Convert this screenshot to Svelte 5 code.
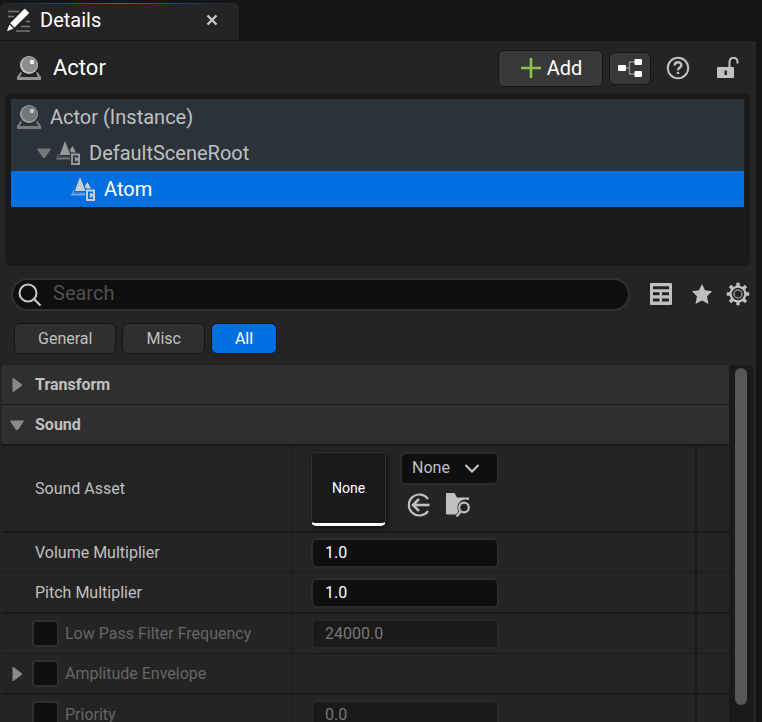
<script>
  const filters = ['General', 'Misc', 'All'];
  let active = $state('All');
  let search = $state('');
  let asset = $state('None');
  let volume = $state('1.0');
  let pitch = $state('1.0');
  let frequency = $state('24000.0');
  let priority = $state('0.0');
</script>

{#snippet actorIcon()}
  <svg class="actor-icon" width="24" height="24" viewBox="0 0 24 24" aria-hidden="true">
    <path d="M3.500 16 L0 21 V24 H24 V21 L20.500 16 H19.500 V18 L21 21 H3 L4.500 18 V16Z" fill="#939393" />
    <circle cx="12" cy="9" r="9" fill="#c4c4c4" />
    <circle cx="12.500" cy="8.500" r="7.800" fill="#8d8d8d" />
    <circle cx="15" cy="6" r="2.200" fill="#fff" />
  </svg>
{/snippet}

{#snippet sceneIcon()}
  <svg class="scene-icon" width="24" height="24" viewBox="0 0 24 24" aria-hidden="true">
    <path d="M2.500 15 L0 18.500 H14 V15.500 H2.500Z" fill="currentColor" opacity=".35" />
    <path d="M1 16.500 L3 13 M0 17.800 H14" stroke="currentColor" stroke-width="1" opacity=".6" />
    <path d="M9 0 L14.500 14 H3.800Z M16.500 5 L20 11.500 H15 L13.800 9Z" fill="currentColor" />
    <path fill-rule="evenodd" d="M15 12.500 H24 V24 H15Z M17 14.500 V22 H22 V19.500 H20.700 V20.500 H18.800 V16 H20.700 V17 H22 V14.500Z" fill="currentColor" />
  </svg>
{/snippet}

{#snippet arrow(open)}
  <svg class="arrow" width="16" height="16" viewBox="0 0 16 16" aria-hidden="true">
    {#if open}
      <path d="M1.500 4 H14.500 L8.800 12.500 H7.200Z" fill="currentColor" stroke="currentColor" stroke-linejoin="round" />
    {:else}
      <path d="M4 1.200 L12.500 7.500 V8.500 L4 14.800Z" fill="currentColor" stroke="currentColor" stroke-linejoin="round" />
    {/if}
  </svg>
{/snippet}

<div class="window">
  <header class="tabs">
    <div class="tab">
      <svg width="24" height="24" viewBox="0 0 24 24" aria-hidden="true">
        <path d="M1 3.500 H12.500 M1 8.500 H7 M19 13.500 H23 M14 18.500 H23 M9 23 H23" stroke="#777" stroke-width="1.500" />
        <path d="M16.500 1.800 L18 .8 L22 4.800 L21 6.300 L7.500 19.500 L3.200 15.200Z" fill="#fff" />
        <path d="M2.500 16.500 L6.500 20.500 L0 23.300Z" fill="#fff" />
      </svg>
      <span>Details</span>
      <button class="plain close" aria-label="Close tab">
        <svg width="12" height="12" viewBox="0 0 12 12"><path d="M1.500 1.500 L10.500 10.500 M10.500 1.500 L1.500 10.500" stroke="#c8c8c8" stroke-width="2.400" /></svg>
      </button>
    </div>
  </header>

  <main class="panel">
    <div class="title">
      {@render actorIcon()}
      <h1>Actor</h1>
      <button class="raised add">
        <svg width="20" height="20" viewBox="0 0 20 20" aria-hidden="true"><path d="M10 0 V20 M0 10 H20" stroke="#8bc24a" stroke-width="2.600" /></svg>
        Add
      </button>
      <button class="raised graph" aria-label="Edit blueprint">
        <svg width="24" height="20" viewBox="0 0 24 20">
          <path d="M8 10 H11.500 M17 4 H11.500 V16 H17" fill="none" stroke="#8c8c8c" stroke-width="1.300" />
          <rect x="0" y="7" width="8" height="6" rx="1" fill="#fff" />
          <rect x="16.500" y="1" width="7.500" height="6" rx="1" fill="#fff" />
          <rect x="16.500" y="13" width="7.500" height="6" rx="1" fill="#fff" />
        </svg>
      </button>
      <button class="plain help" aria-label="Help">
        <svg width="24" height="24" viewBox="0 0 24 24">
          <circle cx="12" cy="12" r="10.200" fill="none" stroke="#c0c0c0" stroke-width="2" />
          <path d="M8.600 9.400 C8.600 5.200 15.400 5.200 15.400 9.200 C15.400 11.600 12 11.500 12 14.200" fill="none" stroke="#c0c0c0" stroke-width="2.400" />
          <rect x="10.800" y="15.800" width="2.400" height="2.300" fill="#c0c0c0" />
        </svg>
      </button>
      <button class="plain lock" aria-label="Lock details">
        <svg width="22" height="22" viewBox="0 0 22 22">
          <path d="M12.500 11 V5.500 C12.500 -.8 20.500 -.8 20.500 5 V6.500" fill="none" stroke="#c0c0c0" stroke-width="2" />
          <path fill-rule="evenodd" d="M1 10 H16 Q17 10 17 11 V20.200 Q17 21 16 21 H1 Q0 21 0 20.200 V11 Q0 10 1 10Z M7.500 13.500 V18 H10 V13.500Z" fill="#c0c0c0" />
        </svg>
      </button>
    </div>

    <div class="tree" role="tree" aria-label="Components">
      <div class="node" role="treeitem" aria-selected="false">{@render actorIcon()}<span>Actor (Instance)</span></div>
      <div class="node child" role="treeitem" aria-selected="false">{@render arrow(true)}{@render sceneIcon()}<span>DefaultSceneRoot</span></div>
      <div class="node grandchild selected" role="treeitem" aria-selected="true">{@render sceneIcon()}<span>Atom</span></div>
    </div>

    <div class="tools">
      <label class="search">
        <svg width="24" height="24" viewBox="0 0 24 24" aria-hidden="true">
          <circle cx="10" cy="10" r="8.500" fill="none" stroke="#c8c8c8" stroke-width="2" />
          <path d="M16 16 L22.500 22.500" stroke="#c8c8c8" stroke-width="2.200" />
        </svg>
        <input type="text" placeholder="Search" aria-label="Search" bind:value={search} />
      </label>
      <button class="plain" aria-label="Property matrix">
        <svg width="22" height="22" viewBox="0 0 22 22">
          <path fill-rule="evenodd" fill="#c0c0c0" d="M1 0 H21 Q22 0 22 1 V21 Q22 22 21 22 H1 Q0 22 0 21 V1 Q0 0 1 0Z M3 3.200 V6.200 H19 V3.200Z M3 9.200 V12.200 H9.500 V9.200Z M12 9.200 V12.200 H19 V9.200Z M3 15.500 V18.500 H9.500 V15.500Z M12 15.500 V18.500 H19 V15.500Z" />
        </svg>
      </button>
      <button class="plain" aria-label="Favorites">
        <svg width="20" height="20" viewBox="0 0 20 20"><path fill="#c0c0c0" d="M10 0 L13 6.200 L20 7.200 L15 12.200 L16.500 20 L10 16.500 L3.500 20 L5 12.200 L0 7.200 L7 6.200Z" /></svg>
      </button>
      <button class="plain" aria-label="Settings">
        <svg width="24" height="24" viewBox="0 0 24 24">
          <g fill="none" stroke="#c0c0c0">
            <circle cx="12" cy="12" r="7.400" stroke-width="2.400" />
            <path stroke-width="3.400" d="M12 .8 V4.500 M12 19.500 V23.200 M.8 12 H4.500 M19.500 12 H23.200 M4 4 L6.800 6.800 M17.200 17.200 L20 20 M20 4 L17.200 6.800 M6.800 17.200 L4 20" />
            <circle cx="12" cy="12" r="4" stroke="#8e8e8e" stroke-width="1.500" />
          </g>
        </svg>
      </button>
    </div>

    <div class="filters">
      {#each filters as name}
        <button class:active={active === name} onclick={() => (active = name)}>{name}</button>
      {/each}
    </div>

    <div class="properties">
      <div class="list">
        <button class="category">{@render arrow(false)}Transform</button>
        <button class="category open">{@render arrow(true)}Sound</button>

        <div class="row asset thick">
          <label class="name" for="asset">Sound Asset</label>
          <div class="value">
            <div class="thumb">None</div>
            <div class="picker">
              <div class="combo">
                <select id="asset" bind:value={asset}><option>None</option></select>
                <svg width="16" height="9" viewBox="0 0 16 9" aria-hidden="true"><path d="M1.500 1 L8 7.500 L14.500 1" fill="none" stroke="#c8c8c8" stroke-width="2" /></svg>
              </div>
              <div class="actions">
                <button class="plain" aria-label="Use selected asset">
                  <svg width="24" height="24" viewBox="0 0 24 24">
                    <g fill="none" stroke="#c0c0c0" stroke-width="2.200">
                      <path d="M21 6 A10.500 10.500 0 1 0 21 18" />
                      <path d="M22.500 12 H6" stroke-width="2.600" /><path d="M12 6 L6 12 L12 18" stroke-width="2.600" />
                    </g>
                  </svg>
                </button>
                <button class="plain" aria-label="Browse to asset">
                  <svg width="24" height="24" viewBox="0 0 24 24">
                    <path d="M1 0 H8.500 L11 4.500 H23 V7 C17 5 11.500 9 11.500 14.500 C11.500 16.500 12 17.500 12.500 18.500 L10 21.500 H1 Q0 21.500 0 20.500 V1 Q0 0 1 0Z" fill="#c0c0c0" />
                    <circle cx="18" cy="14.500" r="4.800" fill="none" stroke="#c0c0c0" stroke-width="2.200" />
                    <path d="M14.800 18.500 L10.500 23.500" stroke="#c0c0c0" stroke-width="2.200" />
                  </svg>
                </button>
              </div>
            </div>
          </div>
          <div class="reset"></div>
        </div>

        <div class="row">
          <label class="name" for="volume">Volume Multiplier</label>
          <div class="value"><input id="volume" class="number" type="text" bind:value={volume} /></div>
          <div class="reset"></div>
        </div>
        <div class="row thick">
          <label class="name" for="pitch">Pitch Multiplier</label>
          <div class="value"><input id="pitch" class="number" type="text" bind:value={pitch} /></div>
          <div class="reset"></div>
        </div>
        <div class="row">
          <label class="name optional"><input type="checkbox" />Low Pass Filter Frequency</label>
          <div class="value"><input class="number" type="text" aria-label="Low Pass Filter Frequency value" disabled bind:value={frequency} /></div>
          <div class="reset"></div>
        </div>
        <div class="row thick">
          <label class="name optional expandable">{@render arrow(false)}<input type="checkbox" />Amplitude Envelope</label>
          <div class="value"></div>
          <div class="reset"></div>
        </div>
        <div class="row">
          <label class="name optional"><input type="checkbox" />Priority</label>
          <div class="value"><input class="number" type="text" aria-label="Priority value" disabled bind:value={priority} /></div>
          <div class="reset"></div>
        </div>
      </div>
      <div class="scrollbar"><div class="handle"></div></div>
    </div>
  </main>
</div>

<style>
  :global(body) { background: #151515; }
  * { box-sizing: border-box; }
  svg { display: block; flex: none; }
  button, input, select { font: inherit; color: inherit; margin: 0; }
  .window {
    height: 100vh;
    display: flex;
    flex-direction: column;
    overflow: hidden;
    background: #151515;
    color: #c0c0c0;
    font: 16px/20px Roboto, sans-serif;
  }
  .tabs { padding-top: 3px; border-bottom: 1px solid #151515; }
  .tab {
    position: relative;
    width: 239px;
    height: 37px;
    padding: 0 21px 3px 7px;
    display: flex;
    align-items: center;
    gap: 9px;
    border-radius: 6px 6px 0 0;
    background: #242424;
    color: #fff;
    font-size: 20px;
  }
  .tab::before {
    content: '';
    position: absolute;
    inset: 0 0 auto;
    height: 1px;
    background: linear-gradient(90deg, transparent, #0070e0 50%, transparent);
  }
  .plain {
    padding: 0;
    border: 0;
    background: none;
    display: grid;
    place-items: center;
    flex: none;
  }
  .close { margin-left: auto; }
  .panel {
    flex: 1;
    min-height: 0;
    margin-right: 6px;
    display: flex;
    flex-direction: column;
    background: #242424;
  }
  .title {
    display: flex;
    align-items: center;
    height: 52px;
    padding: 2px 17px 0 17px;
    flex: none;
    color: #fff;
  }
  h1 { margin: 0 auto 0 12px; font-size: 22px; font-weight: 400; line-height: 28px; }
  .raised {
    display: flex;
    align-items: center;
    justify-content: center;
    padding: 0;
    border: 1px solid #151515;
    border-radius: 6px;
    background: #383838;
  }
  .add { width: 105px; height: 37px; gap: 6px; padding-left: 2px; font-size: 20px; }
  .graph { width: 42px; height: 33px; margin-left: 6px; }
  .help { margin-left: 15px; }
  .lock { margin-left: 27px; }
  .tree {
    height: 173px;
    flex: none;
    margin: 0 6px 0 5px;
    padding: 6px;
    border-radius: 6px;
    background: #1a1a1a;
    font-size: 20px;
  }
  .node {
    display: flex;
    align-items: center;
    height: 36px;
    padding-left: 6px;
    background: #2b323a;
  }
  .node span { margin-left: 9px; }
  .actor-icon { flex: none; }
  .tree .actor-icon { opacity: .75; }
  .child { padding-left: 25px; }
  .child .scene-icon { margin-left: 4px; color: #999; }
  .child .arrow { color: #737578; }
  .grandchild { padding-left: 60px; }
  .selected { background: #0070e0; color: #fff; }
  .selected .scene-icon { color: #c9cdd2; }
  .tools {
    display: flex;
    align-items: center;
    gap: 20px;
    padding: 12px 6px 12px 11px;
    flex: none;
  }
  .search {
    flex: 1;
    display: flex;
    align-items: center;
    height: 33px;
    padding-left: 5px;
    border: 2px solid #303030;
    border-radius: 17px;
    background: #0f0f0f;
  }
  .search input {
    flex: 1;
    min-width: 0;
    height: 29px;
    padding: 0 11px 4px;
    border: 0;
    outline: 0;
    background: none;
    font-size: 20px;
  }
  .search input::placeholder { color: #505050; opacity: 1; }
  .tools .plain { padding-bottom: 2px; }
  .tools .plain:last-child { margin-left: -6px; }
  .filters { display: flex; gap: 6px; padding: 0 14px 11px; flex: none; }
  .filters button {
    height: 31px;
    padding: 0 23px;
    border: 1px solid #151515;
    border-radius: 6px;
    background: #2f2f2f;
  }
  .filters .active { background: #0070e0; color: #fff; }
  .properties { flex: 1; min-height: 0; display: flex; padding: 0 3px 0 2px; overflow: hidden; }
  .list { flex: 1; min-width: 0; }
  .category {
    display: flex;
    align-items: center;
    gap: 10px;
    width: 100%;
    height: 40px;
    padding: 0 0 0 7px;
    border: 0;
    border-bottom: 1px solid #1a1a1a;
    background: #2f2f2f;
    font-weight: 700;
  }
  .open { height: 41px; border-bottom-width: 2px; }
  .arrow { color: #8a8a8a; }
  .row {
    display: grid;
    grid-template-columns: 291px 1fr 34px;
    height: 40px;
    border-bottom: 1px solid #1a1a1a;
  }
  .thick { height: 41px; border-bottom-width: 2px; }
  .asset { height: 87px; }
  .name {
    display: flex;
    align-items: center;
    padding-left: 33px;
    border-right: 1px solid #1a1a1a;
    white-space: nowrap;
  }
  .optional { padding-left: 30px; color: #666; }
  .expandable { padding-left: 7px; gap: 0; }
  .expandable .arrow { margin-right: 7px; }
  .optional input {
    appearance: none;
    width: 27px;
    height: 27px;
    margin-right: 6px;
    border: 2px solid #2f2f2f;
    border-radius: 4px;
    background: #0f0f0f;
  }
  .value { display: flex; align-items: center; padding-left: 18px; min-width: 0; }
  .reset { border-left: 2px solid #1a1a1a; }
  .number {
    width: 188px;
    height: 30px;
    padding: 0 12px;
    border: 2px solid #2c2c2c;
    border-radius: 6px;
    background: #0f0f0f;
    color: #fff;
  }
  .number:disabled { background: #1a1a1a; border-color: #282828; color: #777; }
  .thumb {
    width: 75px;
    height: 74px;
    display: grid;
    place-items: center;
    border: 1px solid #303030;
    border-bottom: 3px solid #fff;
    border-radius: 5px;
    background: #1a1a1a;
    box-shadow: 2px 2px 4px #111;
    color: #fff;
    font-size: 14px;
  }
  .picker { display: flex; flex-direction: column; gap: 8px; height: 74px; margin-left: 14px; }
  .combo { display: grid; align-items: center; justify-items: end; }
  .combo select, .combo svg { grid-area: 1 / 1; }
  .combo svg { margin-right: 19px; pointer-events: none; }
  select {
    appearance: none;
    width: 99px;
    height: 33px;
    padding: 0 10px;
    border: 2px solid #2c2c2c;
    border-radius: 6px;
    background: #0f0f0f;
  }
  .actions { display: flex; gap: 15px; padding-left: 7px; }
  .scrollbar { width: 24px; padding: 3px 6px 17px; background: #1a1a1a; }
  .handle { width: 12px; height: 100%; border-radius: 6px; background: #575757; }
</style>
